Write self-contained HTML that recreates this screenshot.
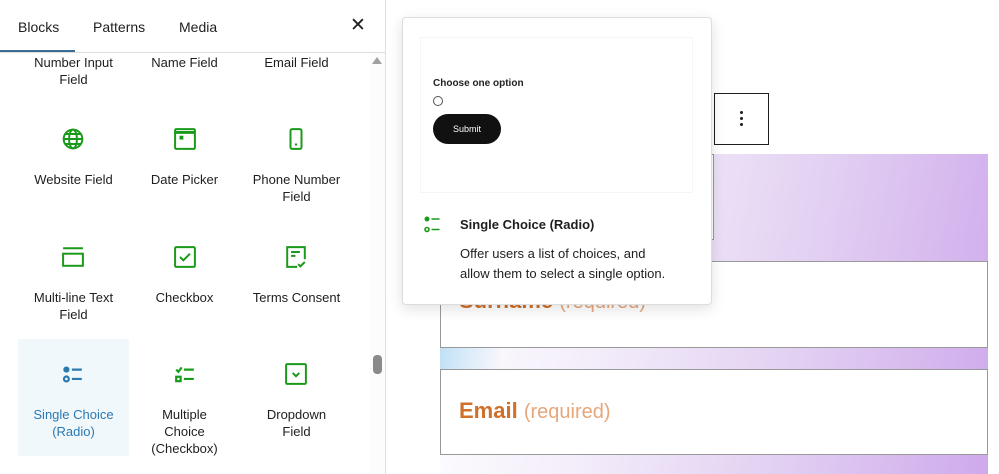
<!DOCTYPE html>
<html><head><style>
*{margin:0;padding:0;box-sizing:border-box}
body{width:999px;height:474px;overflow:hidden;background:#fff;font-family:"Liberation Sans",sans-serif;position:relative;color:#1e1e1e}
.a{position:absolute}
.tab{position:absolute;top:19px;font-size:14px;color:#1e1e1e}
.lbl{position:absolute;width:111px;text-align:center;font-size:13px;line-height:17px;color:#1e1e1e}
.ic{position:absolute;width:22px;height:22px}
.grad{background:linear-gradient(100deg,#fff 0%,#f4eefa 30%,#e2d0f2 65%,#cfa9ec 100%)}
</style></head><body>
<div class="a" style="left:385px;top:0;width:1px;height:474px;background:#e0e0e0"></div>
<div class="a" style="left:0;top:52px;width:385px;height:1px;background:#ddd"></div>
<div class="a" style="left:0;top:50px;width:75px;height:2px;background:#3a6e96"></div>
<div class="tab" style="left:18px">Blocks</div>
<div class="tab" style="left:93px">Patterns</div>
<div class="tab" style="left:179px">Media</div>
<div class="a" style="left:350px;top:14px;font-size:19px;color:#1e1e1e">✕</div>
<div class="a" style="left:370px;top:53px;width:15px;height:421px;background:#fcfcfc"></div>
<div class="a" style="left:372px;top:57px;width:0;height:0;border-left:5px solid transparent;border-right:5px solid transparent;border-bottom:7px solid #a0a0a0"></div>
<div class="a" style="left:373px;top:355px;width:9px;height:19px;border-radius:4px;background:#8a8a8a"></div>
<div class="a" style="left:18px;top:339px;width:111px;height:117px;background:#f1f8fc"></div>

<div class="lbl" style="left:18px;top:54px">Number Input<br>Field</div>
<div class="lbl" style="left:129px;top:54px">Name Field</div>
<div class="lbl" style="left:241px;top:54px">Email Field</div>

<svg class="ic" style="left:62px;top:128px" viewBox="2 2 20 20" fill="none" stroke="#1a9a1a" stroke-width="1.8"><circle cx="12" cy="12" r="8.5"/><ellipse cx="12" cy="12" rx="3.6" ry="8.5"/><path d="M3.5 12h17M5 7.5h14M5 16.5h14"/></svg>
<svg class="ic" style="left:174px;top:128px" viewBox="2 2 20 20" fill="none" stroke="#1a9a1a" stroke-width="1.8"><rect x="3" y="3" width="18" height="18" rx="1"/><path d="M3 6h18" stroke-width="2.6"/><rect x="7" y="9" width="3.5" height="3.5" fill="#1a9a1a" stroke="none"/></svg>
<svg class="ic" style="left:285px;top:128px" viewBox="2 2 20 20" fill="none" stroke="#1a9a1a" stroke-width="1.8"><rect x="7" y="3" width="10" height="18" rx="1.5"/><path d="M11 17h2"/></svg>
<div class="lbl" style="left:18px;top:171px">Website Field</div>
<div class="lbl" style="left:129px;top:171px">Date Picker</div>
<div class="lbl" style="left:241px;top:171px">Phone Number<br>Field</div>

<svg class="ic" style="left:62px;top:246px" viewBox="2 2 20 20" fill="none" stroke="#1a9a1a" stroke-width="1.8"><path d="M3 4h18"/><rect x="3" y="9" width="18" height="11"/></svg>
<svg class="ic" style="left:174px;top:246px" viewBox="2 2 20 20" fill="none" stroke="#1a9a1a" stroke-width="1.8"><rect x="3" y="3" width="18" height="18" rx="1"/><path d="M7.5 12l3 3 6-6"/></svg>
<svg class="ic" style="left:285px;top:246px" viewBox="2 2 20 20" fill="none" stroke="#1a9a1a" stroke-width="1.8"><path d="M13 21H4V3h16v11"/><path d="M7.5 7.5h8M7.5 11h4M14 18.5l2 2 4-4"/></svg>
<div class="lbl" style="left:18px;top:289px">Multi-line Text<br>Field</div>
<div class="lbl" style="left:129px;top:289px">Checkbox</div>
<div class="lbl" style="left:241px;top:289px">Terms Consent</div>

<svg class="ic" style="left:62px;top:363px" viewBox="2 2 20 20" fill="none" stroke="#2a79b1" stroke-width="2"><circle cx="6" cy="8" r="2.8" fill="#2a79b1" stroke="none"/><circle cx="6" cy="16.5" r="2.2"/><path d="M11 8h9M11 16.5h9"/></svg>
<svg class="ic" style="left:174px;top:363px" viewBox="2 2 20 20" fill="none" stroke="#1a9a1a" stroke-width="2"><path d="M4 8l2 2 3-4M11 8h9M11 16.5h9"/><rect x="4" y="14.5" width="4" height="4"/></svg>
<svg class="ic" style="left:285px;top:363px" viewBox="2 2 20 20" fill="none" stroke="#1a9a1a" stroke-width="1.8"><rect x="3" y="3" width="18" height="18" rx="1"/><path d="M9 11l3 3 3-3"/></svg>
<div class="lbl" style="left:18px;top:406px;color:#2a79b1">Single Choice<br>(Radio)</div>
<div class="lbl" style="left:129px;top:406px">Multiple<br>Choice<br>(Checkbox)</div>
<div class="lbl" style="left:241px;top:406px">Dropdown<br>Field</div>

<div class="a grad" style="left:440px;top:154px;width:548px;height:320px"></div>
<div class="a" style="left:440px;top:347px;width:60px;height:22px;background:linear-gradient(100deg,#bfe0f5,rgba(255,255,255,0))"></div>
<div class="a" style="left:440px;top:154px;width:274px;height:86px;background:#fff;border:1px solid #999"></div>
<div class="a" style="left:440px;top:261px;width:548px;height:87px;background:#fff;border:1px solid #999"></div>
<div class="a" style="left:459px;top:288px;font-size:22px;font-weight:bold;color:#d0702a">Surname <span style="font-weight:normal;color:#e6a679;font-size:20px">(required)</span></div>
<div class="a" style="left:440px;top:369px;width:548px;height:86px;background:#fff;border:1px solid #999"></div>
<div class="a" style="left:459px;top:398px;font-size:22px;font-weight:bold;color:#d0702a">Email <span style="font-weight:normal;color:#e6a679;font-size:20px">(required)</span></div>
<div class="a" style="left:714px;top:93px;width:55px;height:52px;background:#fff;border:1px solid #1e1e1e"></div>
<div class="a" style="left:740px;top:111px;width:3px;height:3px;border-radius:2px;background:#1e1e1e;box-shadow:0 6px 0 #1e1e1e,0 12px 0 #1e1e1e"></div>

<div class="a" style="left:402px;top:17px;width:310px;height:288px;background:#fff;border:1px solid #ddd;border-radius:4px;box-shadow:0 4px 14px rgba(0,0,0,.12)"></div>
<div class="a" style="left:420px;top:37px;width:273px;height:156px;border:1px solid #f6f6f6"></div>
<div class="a" style="left:433px;top:78px;font-size:10px;font-weight:bold;color:#222">Choose one option</div>
<div class="a" style="left:433px;top:96px;width:10px;height:10px;border:1px solid #555;border-radius:50%"></div>
<div class="a" style="left:433px;top:114px;width:68px;height:30px;background:#111;border-radius:15px;color:#fff;font-size:9px;text-align:center;line-height:30px">Submit</div>
<svg class="a" style="left:424px;top:216px;width:18px;height:18px" viewBox="0 0 18 18" fill="none" stroke="#1a9a1a" stroke-width="1.6"><circle cx="3" cy="3" r="2.5" fill="#1a9a1a" stroke="none"/><circle cx="3" cy="13.5" r="2"/><path d="M7.5 3h8M7.5 13.5h8"/></svg>
<div class="a" style="left:460px;top:217px;font-size:13px;font-weight:bold;color:#1e1e1e">Single Choice (Radio)</div>
<div class="a" style="left:460px;top:244px;font-size:13px;line-height:20px;color:#1e1e1e">Offer users a list of choices, and<br>allow them to select a single option.</div>
</body></html>
